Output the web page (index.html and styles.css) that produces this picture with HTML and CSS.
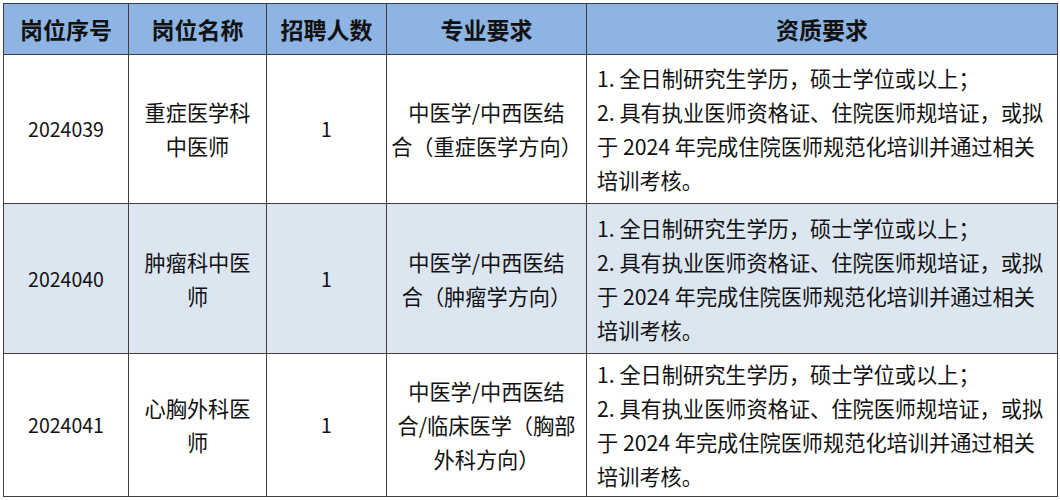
FILE: index.html
```html
<!DOCTYPE html>
<html lang="zh-CN">
<head>
<meta charset="utf-8">
<title>岗位表</title>
<link rel="stylesheet" href="styles.css">
</head>
<body>
<table class="jobs">
  <colgroup>
    <col class="c1"><col class="c2"><col class="c3"><col class="c4"><col class="c5">
  </colgroup>
  <thead>
    <tr class="head">
      <th>岗位序号</th><th>岗位名称</th><th>招聘人数</th><th>专业要求</th><th>资质要求</th>
    </tr>
  </thead>
  <tbody>
    <tr class="r1">
      <td class="num">2024039</td>
      <td>重症医学科<br>中医师</td>
      <td class="num">1</td>
      <td>中医学/中西医结<br>合（重症医学方向）</td>
      <td class="req">1. 全日制研究生学历，硕士学位或以上；<br>2. 具有执业医师资格证、住院医师规培证，或拟<br>于 2024 年完成住院医师规范化培训并通过相关<br>培训考核。</td>
    </tr>
    <tr class="r2 alt">
      <td class="num">2024040</td>
      <td>肿瘤科中医<br>师</td>
      <td class="num">1</td>
      <td>中医学/中西医结<br>合（肿瘤学方向）</td>
      <td class="req">1. 全日制研究生学历，硕士学位或以上；<br>2. 具有执业医师资格证、住院医师规培证，或拟<br>于 2024 年完成住院医师规范化培训并通过相关<br>培训考核。</td>
    </tr>
    <tr class="r3">
      <td class="num">2024041</td>
      <td>心胸外科医<br>师</td>
      <td class="num">1</td>
      <td>中医学/中西医结<br>合/临床医学（胸部<br>外科方向）</td>
      <td class="req">1. 全日制研究生学历，硕士学位或以上；<br>2. 具有执业医师资格证、住院医师规培证，或拟<br>于 2024 年完成住院医师规范化培训并通过相关<br>培训考核。</td>
    </tr>
  </tbody>
</table>
</body>
</html>
```

FILE: styles.css
```css
html, body {
  margin: 0;
  padding: 0;
  background: #ffffff;
}
body {
  padding: 3px 0 0 3px;
  font-family: "Noto Sans CJK SC", "Noto Sans", sans-serif;
  color: #111111;
}
.jobs {
  border-collapse: collapse;
  table-layout: fixed;
  width: 1054px;
}
.c1 { width: 125px; }
.c2 { width: 138px; }
.c3 { width: 120px; }
.c4 { width: 200px; }
.c5 { width: 471px; }
.jobs th, .jobs td {
  border: 1.5px solid #3f3f3f;
  padding: 0;
  text-align: center;
  vertical-align: middle;
  white-space: nowrap;
}
.jobs th {
  background: #8db4e2;
  font-size: 23px;
  font-weight: 700;
  line-height: 30px;
  color: #111111;
}
.jobs td {
  font-size: 21.2px;
  line-height: 34px;
}
.jobs td.num {
  font-size: 19.5px;
}
.jobs td.req {
  text-align: left;
  padding-left: 10px;
}
.head { height: 51px; }
.r1 { height: 149px; }
.r2 { height: 150px; }
.r3 { height: 143px; }
.alt td { background: #dce6f1; }
```
